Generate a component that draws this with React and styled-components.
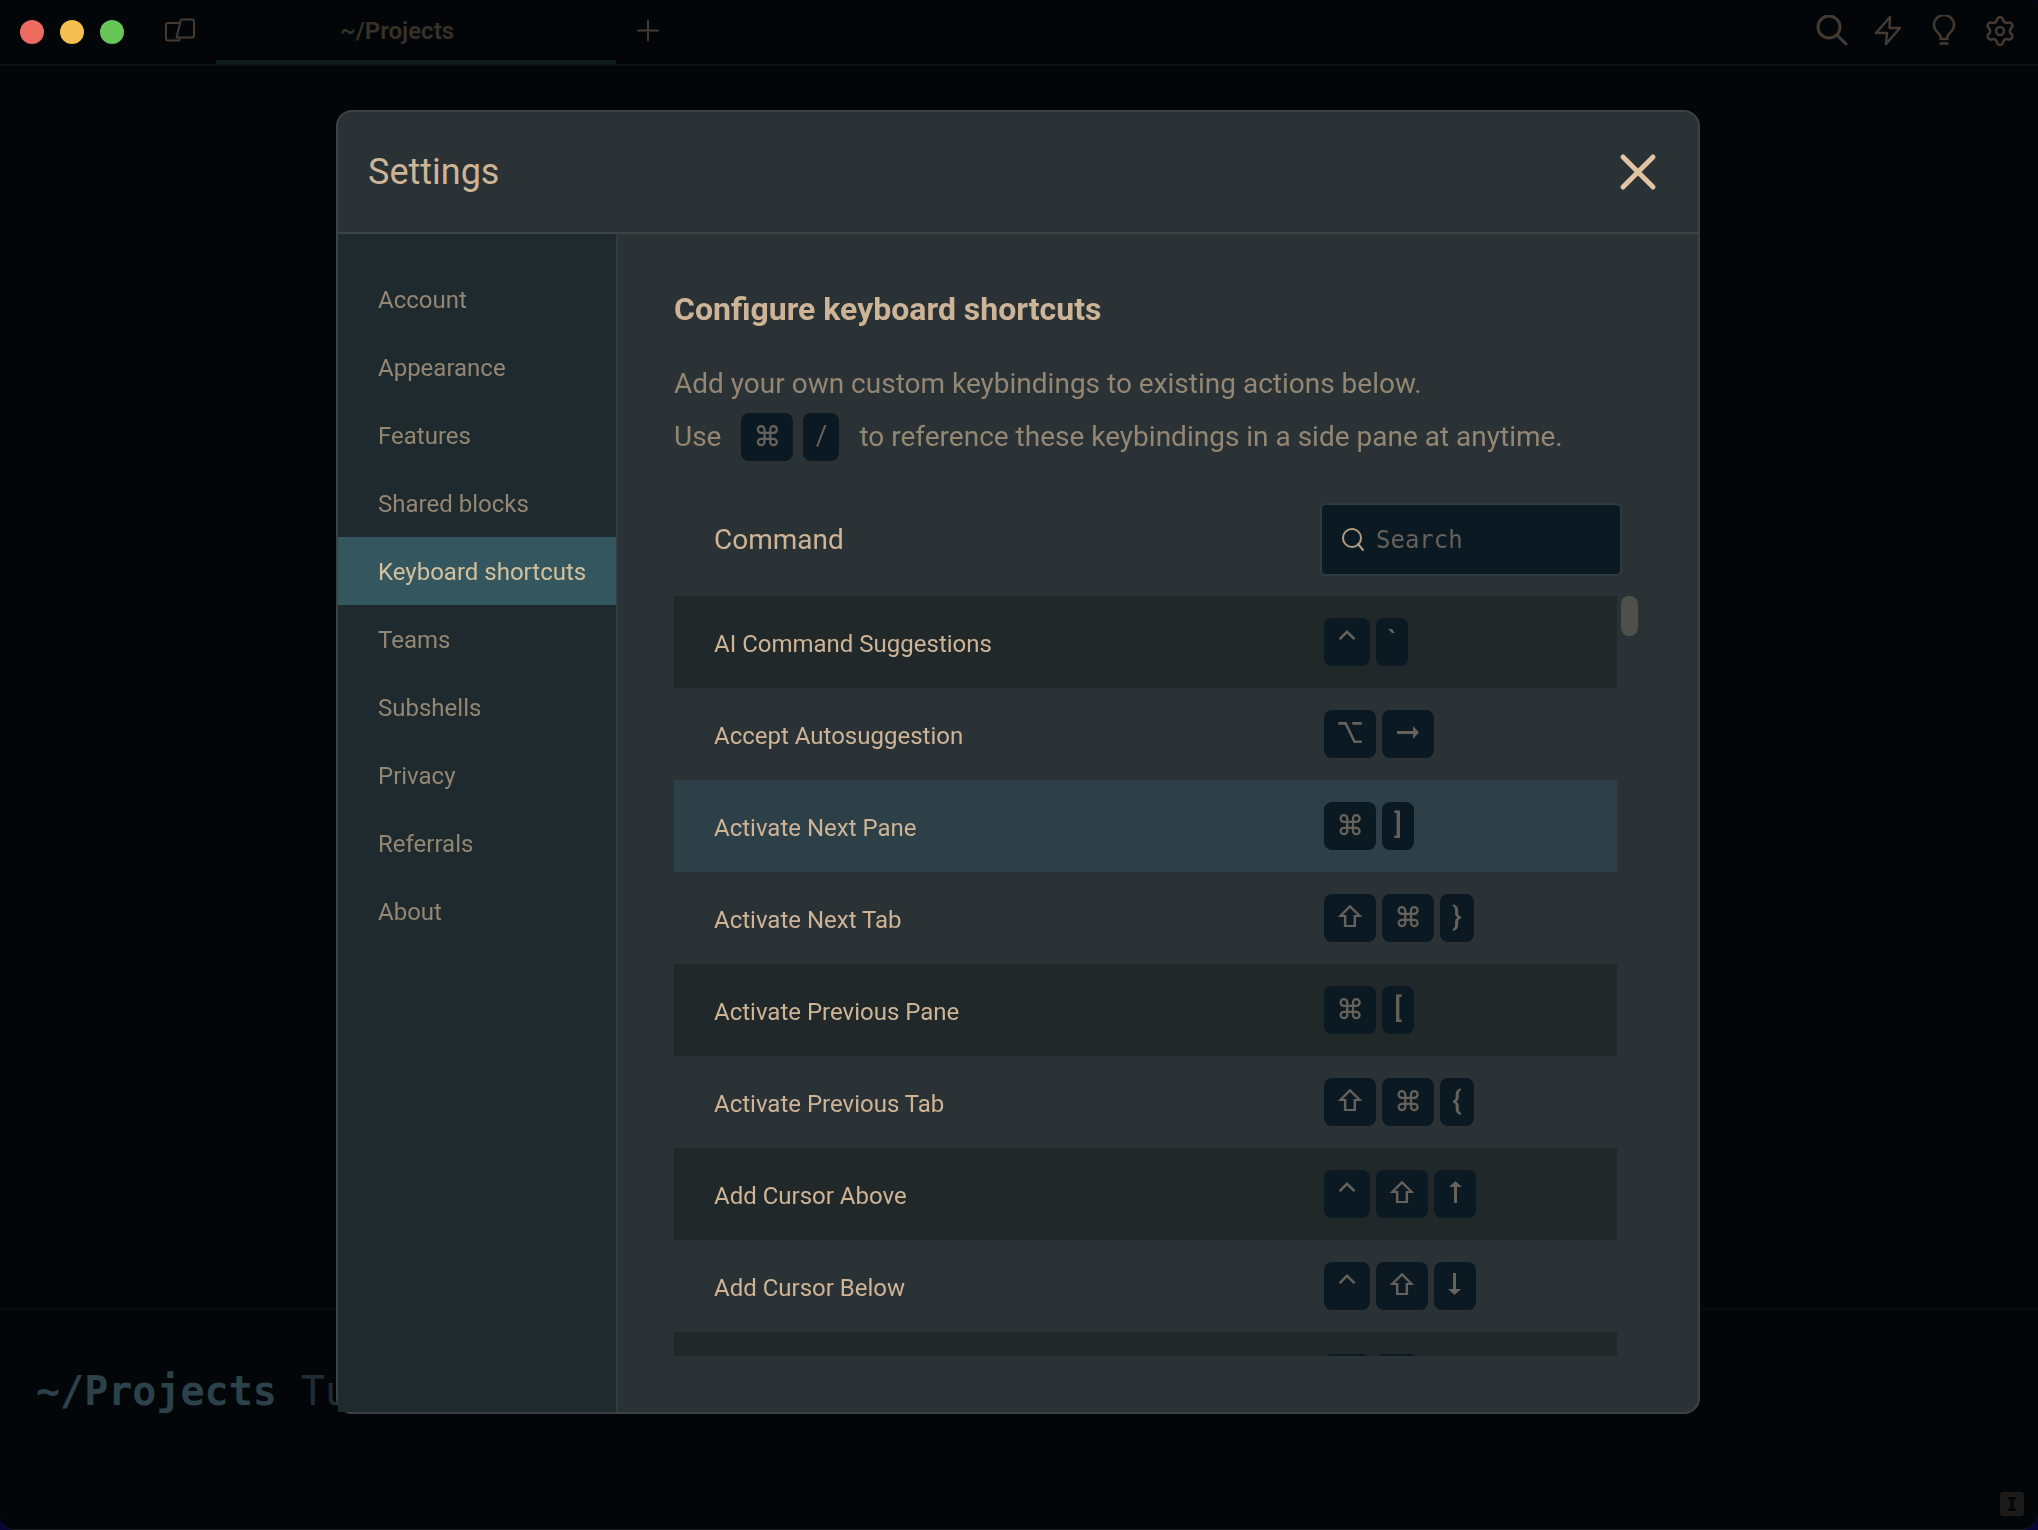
import React from "react";
import styled, { createGlobalStyle } from "styled-components";

const color = {
  desktop: "#0b0436",
  window: "#020609",
  line: "#0e1011",
  panel: "#2a3235",
  panelLine: "#3d4342",
  sidebar: "#1f2a2f",
  active: "#34575f",
  rowAlt: "#212829",
  rowHover: "#2e4047",
  field: "#0b1922",
  fieldLine: "#313a3e",
  text: "#ceb496",
  muted: "#938672",
  faint: "#66615a",
  chrome: "#443a32",
};

const sans = `Roboto, "Open Sans", "Liberation Sans", sans-serif`;
const mono = `"DejaVu Sans Mono", "Liberation Mono", monospace`;

const GlobalStyle = createGlobalStyle`
  *, *::before, *::after { box-sizing: border-box; }
  body { margin: 0; background: ${color.desktop}; font-family: ${sans}; }
  button, input { font: inherit; }
`;

const Window = styled.div`
  display: flex;
  flex-direction: column;
  min-height: 100vh;
  background: ${color.window};
  border-bottom: 1px solid #1a1b1c;
  border-radius: 2px 3px 18px 14px;
  overflow: hidden;
`;

const TitleBar = styled.header`
  display: flex;
  align-items: center;
  height: 66px;
  padding: 0 22px 0 20px;
  border-bottom: 2px solid ${color.line};
`;

const TrafficLights = styled.div`
  display: flex;
  gap: 16px;
  margin-right: 40px;
`;

const Light = styled.button`
  width: 24px;
  height: 24px;
  padding: 0;
  border: 0;
  border-radius: 50%;
  background: ${(p) => p.$fill};
`;

const IconButton = styled.button`
  display: grid;
  place-items: center;
  width: ${(p) => p.$size || 32}px;
  height: ${(p) => p.$size || 32}px;
  padding: 0;
  border: 0;
  background: none;
  color: ${(p) => p.$color || color.chrome};
`;

const Tab = styled.button`
  align-self: stretch;
  width: 400px;
  margin: 0 16px 0 20px;
  padding: 2px 38px 0 0;
  border: 0;
  border-bottom: 4px solid #0f1c1e;
  background: none;
  color: #373129;
  font-size: 24px;
  font-weight: 600;
`;

const Tools = styled.nav`
  display: flex;
  gap: 24px;
  margin-left: auto;
  padding-bottom: 2px;
`;

const Terminal = styled.main`
  flex: 1;
  display: flex;
  flex-direction: column;
  justify-content: flex-end;
`;

const Prompt = styled.label`
  display: flex;
  align-items: flex-start;
  gap: 24px;
  height: 184px;
  padding: 55px 36px 0;
  border-top: 2px solid #080c0e;
  font-family: ${mono};
  font-size: 40px;
  line-height: 52px;
  color: #2b424a;
`;

const Cwd = styled.span`
  font-weight: 700;
`;

const PromptInput = styled.input`
  flex: 1;
  min-width: 0;
  height: 52px;
  padding: 0;
  border: 0;
  outline: 0;
  background: none;
  &::placeholder { color: #1e2e34; opacity: 1; }
`;

const StatusBar = styled.footer`
  display: flex;
  justify-content: flex-end;
  padding: 0 14px 13px;
`;

const CursorBadge = styled.span`
  width: 24px;
  height: 24px;
  border-radius: 3px;
  background: #1c1b19;
  color: ${color.window};
  font: 700 20px/24px ${mono};
  text-align: center;
`;

const Overlay = styled.div`
  position: fixed;
  inset: 0;
  display: flex;
  align-items: flex-start;
  justify-content: center;
  padding: 110px 42px 0 40px;
`;

const Dialog = styled.section`
  width: 100%;
  max-width: 1364px;
  border: 2px solid ${color.panelLine};
  border-radius: 16px;
  background: ${color.panel};
  color: ${color.text};
`;

const DialogHeader = styled.header`
  display: flex;
  align-items: center;
  justify-content: space-between;
  height: 122px;
  padding: 0 36px 0 30px;
  border-bottom: 2px solid ${color.panelLine};
`;

const DialogTitle = styled.h1`
  margin: 0;
  font-size: 36px;
  font-weight: 400;
`;

const DialogBody = styled.div`
  display: flex;
`;

const Sidebar = styled.nav`
  flex: none;
  width: 280px;
  padding-top: 31px;
  border-right: 2px solid #343b3d;
  background: ${color.sidebar};
`;

const SideLink = styled.a`
  display: block;
  padding: 2px 0 0 40px;
  font-size: 24px;
  line-height: 66px;
  text-decoration: none;
  white-space: nowrap;
  color: ${(p) => (p.$active ? "#d3c09c" : color.muted)};
  background: ${(p) => (p.$active ? color.active : "transparent")};
`;

const Content = styled.div`
  flex: 1;
  min-width: 0;
  padding: 55px 60px 56px 56px;
`;

const Heading = styled.h2`
  margin: 0 0 28px;
  font-size: 32px;
  line-height: 40px;
  font-weight: 700;
`;

const Help = styled.p`
  display: flex;
  align-items: center;
  gap: 20px;
  margin: 0;
  font-size: 28px;
  line-height: 53px;
  color: ${color.muted};
`;

const Keys = styled.span`
  display: flex;
  gap: ${(p) => p.$gap || 6}px;
`;

const Key = styled.kbd`
  display: block;
  min-width: ${(p) => p.$width}px;
  height: 48px;
  border-radius: 8px;
  background: ${color.field};
  color: ${color.faint};
  font-family: ${(p) => p.$font};
  font-size: 28px;
  font-weight: ${(p) => p.$weight || 500};
  line-height: 46px;
  text-align: center;

  svg { display: block; margin: 10px auto 0; }
`;

const ListHeader = styled.div`
  display: flex;
  align-items: center;
  justify-content: space-between;
  margin: 40px 16px 20px 40px;
  font-size: 28px;
`;

const SearchBox = styled.label`
  display: flex;
  align-items: center;
  gap: 10px;
  width: 302px;
  height: 73px;
  padding: 0 20px;
  border: 2px solid ${color.fieldLine};
  border-radius: 6px;
  background: ${color.field};
  color: #b09b83;
`;

const SearchInput = styled.input`
  flex: 1;
  min-width: 0;
  padding: 0;
  border: 0;
  outline: 0;
  background: none;
  color: ${color.text};
  font-family: ${mono};
  font-size: 24px;
  &::placeholder { color: ${color.faint}; opacity: 1; }
`;

const ListArea = styled.div`
  display: flex;
  gap: 4px;
`;

const Scroller = styled.div`
  flex: 1;
  height: 760px;
  overflow: hidden;
`;

const Thumb = styled.div`
  width: 17px;
  height: 40px;
  border-radius: 8px;
  background: #4f504a;
`;

const Table = styled.table`
  width: 100%;
  border-collapse: collapse;
  font-size: 24px;
`;

const rowFill = { alt: color.rowAlt, hover: color.rowHover, plain: "transparent" };

const Row = styled.tr`
  height: 92px;
  background: ${(p) => rowFill[p.$tone]};
`;

const NameCell = styled.th`
  padding: 3px 0 0 40px;
  font-weight: 400;
  text-align: left;
`;

const KeysCell = styled.td`
  width: 293px;
  padding: 0;
`;

const Icon = ({ size = 32, stroke = 2, children }) => (
  <svg width={size} height={size} viewBox={`0 0 ${size} ${size}`} fill="none" stroke="currentColor"
    strokeWidth={stroke} strokeLinecap="round" strokeLinejoin="round" aria-hidden="true">
    {children}
  </svg>
);

// Thin shaft with a small solid head, turned to the direction of the key.
const Arrow = ({ turn }) => (
  <svg width="24" height="24" viewBox="0 0 24 24" fill="currentColor" aria-hidden="true">
    <path d="M1 11h16V6l6 6.500-6 6.500v-5H1Z" transform={`rotate(${turn} 12 12)`} />
  </svg>
);

const inter = `Inter, "DejaVu Sans", sans-serif`;

const glyphs = {
  "⌃": { width: 46, font: inter },
  "⌘": { width: 52, font: inter },
  "⌥": { width: 52, font: inter },
  "⇧": { width: 52, font: inter },
  right: { width: 52, turn: 0 },
  up: { width: 42, turn: -90 },
  down: { width: 42, turn: 90 },
  "`": { width: 32, font: sans },
  "]": { width: 32, font: sans },
  "[": { width: 32, font: sans },
  "}": { width: 34, font: sans },
  "{": { width: 34, font: sans },
  "/": { width: 36, font: sans, weight: 400 },
};

const KeyCombo = ({ keys, gap }) => (
  <Keys $gap={gap}>
    {keys.map((k) => {
      const g = glyphs[k];
      return (
        <Key key={k} $width={g.width} $font={g.font || sans} $weight={g.weight}>
          {g.turn === undefined ? k : <Arrow turn={g.turn} />}
        </Key>
      );
    })}
  </Keys>
);

const sections = [
  "Account", "Appearance", "Features", "Shared blocks", "Keyboard shortcuts",
  "Teams", "Subshells", "Privacy", "Referrals", "About",
];

const commands = [
  { name: "AI Command Suggestions", keys: ["⌃", "`"], tone: "alt" },
  { name: "Accept Autosuggestion", keys: ["⌥", "right"], tone: "plain" },
  { name: "Activate Next Pane", keys: ["⌘", "]"], tone: "hover" },
  { name: "Activate Next Tab", keys: ["⇧", "⌘", "}"], tone: "plain" },
  { name: "Activate Previous Pane", keys: ["⌘", "["], tone: "alt" },
  { name: "Activate Previous Tab", keys: ["⇧", "⌘", "{"], tone: "plain" },
  { name: "Add Cursor Above", keys: ["⌃", "⇧", "up"], tone: "alt" },
  { name: "Add Cursor Below", keys: ["⌃", "⇧", "down"], tone: "plain" },
];

// Six rounded teeth around the centre of a 32px box.
const gearPath = (() => {
  const points = [];
  for (let a = 0; a < 360; a += 4) {
    const t = (a * Math.PI) / 180;
    const wave = -Math.cos(6 * t);
    const r = 11.8 + 2 * Math.sign(wave) * Math.pow(Math.abs(wave), 0.7);
    points.push(`${(16 + r * Math.cos(t)).toFixed(2)} ${(16 + r * Math.sin(t)).toFixed(2)}`);
  }
  return `M${points.join("L")}Z`;
})();

export default function App() {
  return (
    <>
      <GlobalStyle />
      <Window>
        <TitleBar>
          <TrafficLights>
            <Light aria-label="Close window" $fill="#ec6a5e" />
            <Light aria-label="Minimize window" $fill="#f4bf4f" />
            <Light aria-label="Zoom window" $fill="#67c756" />
          </TrafficLights>
          <IconButton aria-label="Panes">
            <Icon>
              <path d="M15 24.500H4a2 2 0 0 1-2-2V9a2 2 0 0 1 2-2h11.500M15.500 21.500v3" />
              <path d="M16.500 5.500a2 2 0 0 1 2-2H28a2 2 0 0 1 2 2v14a2 2 0 0 1-2 2H12.500Z" />
            </Icon>
          </IconButton>
          <Tab>~/Projects</Tab>
          <IconButton aria-label="New tab">
            <Icon><path d="M16 4.500v20M6 14.500h20" /></Icon>
          </IconButton>
          <Tools>
            <IconButton aria-label="Search">
              <Icon stroke={3}><circle cx="13" cy="12" r="11" /><path d="M21 20l9 9" /></Icon>
            </IconButton>
            <IconButton aria-label="Actions">
              <Icon stroke={2.5}><path d="M18 2 4 18h11l-1 11L28 13H17.500Z" /></Icon>
            </IconButton>
            <IconButton aria-label="Tips">
              <Icon stroke={2.5}>
                <path d="M12.500 24v-3c-1-3-6.500-5-6.500-11a10 10 0 0 1 20 0c0 6-5.500 8-6.500 11v3Z" />
                <path d="M12.500 28.500h7" />
              </Icon>
            </IconButton>
            <IconButton aria-label="Settings">
              <Icon stroke={2.5}><path d={gearPath} /><circle cx="16" cy="16" r="4" /></Icon>
            </IconButton>
          </Tools>
        </TitleBar>
        <Terminal>
          <Prompt>
            <Cwd>~/Projects</Cwd>
            <PromptInput placeholder="Tu" />
          </Prompt>
        </Terminal>
        <StatusBar><CursorBadge>I</CursorBadge></StatusBar>
      </Window>

      <Overlay>
        <Dialog role="dialog" aria-labelledby="settings-title">
          <DialogHeader>
            <DialogTitle id="settings-title">Settings</DialogTitle>
            <IconButton aria-label="Close" $size={48} $color="#e0c4a3">
              <Icon size={48} stroke={5}><path d="M9 9l30 30M39 9 9 39" /></Icon>
            </IconButton>
          </DialogHeader>
          <DialogBody>
            <Sidebar>
              {sections.map((s) => (
                <SideLink key={s} href="#" $active={s === "Keyboard shortcuts"}>{s}</SideLink>
              ))}
            </Sidebar>
            <Content>
              <Heading>Configure keyboard shortcuts</Heading>
              <Help>Add your own custom keybindings to existing actions below.</Help>
              <Help>
                <span>Use</span>
                <KeyCombo keys={["⌘", "/"]} gap={10} />
                <span>to reference these keybindings in a side pane at anytime.</span>
              </Help>
              <ListHeader>
                <span>Command</span>
                <SearchBox>
                  <Icon size={24}><circle cx="10" cy="10" r="9" /><path d="M16 16l5 6" /></Icon>
                  <SearchInput type="text" placeholder="Search" aria-label="Search" />
                </SearchBox>
              </ListHeader>
              <ListArea>
                <Scroller>
                  <Table aria-label="Keyboard shortcuts">
                    <tbody>
                      {commands.map((c) => (
                        <Row key={c.name} $tone={c.tone}>
                          <NameCell scope="row">{c.name}</NameCell>
                          <KeysCell><KeyCombo keys={c.keys} /></KeysCell>
                        </Row>
                      ))}
                      <Row $tone="alt">
                        <NameCell scope="row" />
                        <KeysCell>
                          <Keys>
                            <Key $width={46} />
                            <Key $width={42} />
                          </Keys>
                        </KeysCell>
                      </Row>
                    </tbody>
                  </Table>
                </Scroller>
                <Thumb />
              </ListArea>
            </Content>
          </DialogBody>
        </Dialog>
      </Overlay>
    </>
  );
}
